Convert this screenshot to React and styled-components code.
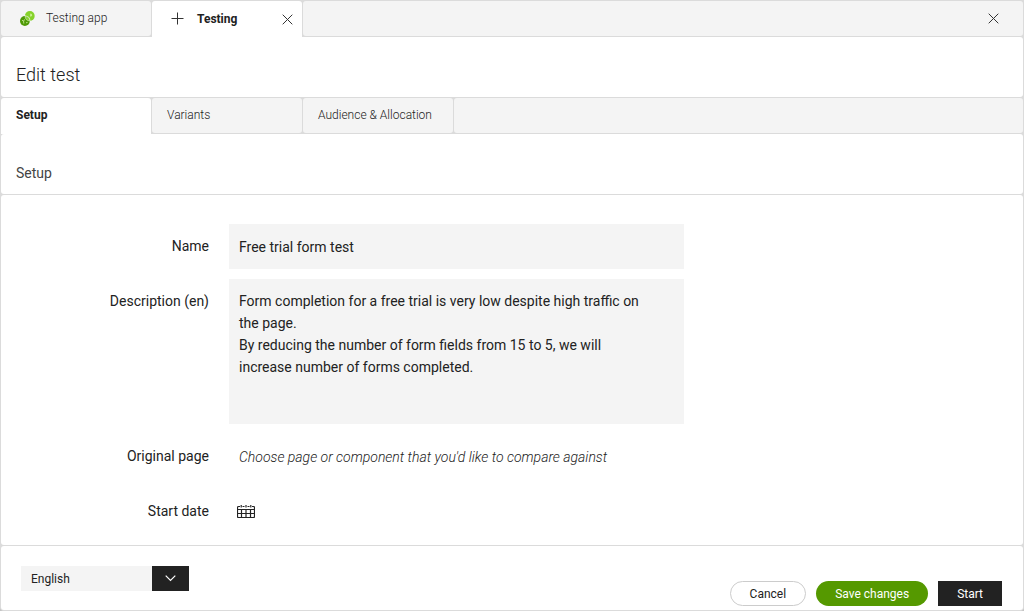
import React from "react";
import styled, { createGlobalStyle, css } from "styled-components";

const line = "#dbdbdb";
const grey = "#f4f4f4";
const ink = "#222222";

const GlobalStyle = createGlobalStyle`
  *, *::before, *::after { box-sizing: border-box; }
  body { margin: 0; background: #c4c4c4; color: ${ink}; font-family: Roboto, "Liberation Sans", sans-serif; font-size: 14px; }
  button, input, textarea, select { font: inherit; color: inherit; }
  h1, h2 { margin: 0; }
`;

const Window = styled.div`
  display: flex;
  flex-direction: column;
  gap: 1px;
  min-height: 100vh;
  padding: 1px;
  background: ${line};
  border-radius: 0 0 4px 4px;
`;

const Panel = styled.section`
  background: #fff;
  border-radius: 3px;
`;

const TabBar = styled.nav`
  display: grid;
  grid-template-columns: ${(p) => `repeat(${p.$tabs}, 150px)`} 1fr;
  grid-template-rows: 35px;
  gap: 1px;
`;

const tabBox = css`
  display: flex;
  align-items: center;
  height: ${(p) => (p.$active ? 36 : 35)}px;
  padding: 0 15px 2px;
  background: ${(p) => (p.$active ? "#fff" : grey)};
  border-radius: ${(p) => (p.$active ? "3px 3px 0 0" : "3px")};
  font-size: 12px;
  font-weight: ${(p) => (p.$active ? 700 : 300)};
`;

const AppTab = styled.div`
  ${tabBox}
  padding: 0 9px 0 18px;
`;

const TabLink = styled.button`
  display: flex;
  flex: 1;
  align-items: center;
  gap: 10px;
  padding: 0 0 1px;
  border: 0;
  background: none;
  cursor: pointer;
`;

const SectionTab = styled.button`
  ${tabBox}
  border: 0;
  text-align: left;
  cursor: pointer;
`;

const TabFiller = styled.div`
  display: flex;
  align-items: center;
  justify-content: flex-end;
  padding-right: 24px;
  background: ${grey};
  border-radius: 3px;
`;

const IconButton = styled.button`
  display: flex;
  padding: 0;
  border: 0;
  background: none;
  cursor: pointer;
`;

const TitlePanel = styled(Panel)`
  padding: 26px 15px 10px;
`;

const Title = styled.h1`
  font-size: 18px;
  font-weight: 300;
  line-height: 24px;
`;

const SubtitlePanel = styled(Panel)`
  padding: 29px 15px 11px;
`;

const Subtitle = styled.h2`
  font-size: 14px;
  font-weight: 400;
  line-height: 20px;
  color: #444;
`;

const FormPanel = styled(Panel).attrs({ as: "form" })`
  display: flex;
  flex: 1;
  flex-direction: column;
  gap: 10px;
  padding: 29px 15px 10px;
`;

const Field = styled.div`
  display: grid;
  grid-template-columns: 193px minmax(0, 455px);
  column-gap: 20px;
`;

const Label = styled.label`
  padding-top: 11px;
  line-height: 22px;
  text-align: right;
`;

const TextInput = styled.input`
  height: 45px;
  padding: 1px 10px 0;
  border: 0;
  background: ${grey};
  outline-color: #590;
`;

const TextArea = styled.textarea`
  height: 145px;
  padding: 11px 40px 11px 10px;
  border: 0;
  background: ${grey};
  line-height: 22px;
  resize: none;
  outline-color: #590;
`;

const PageInput = styled.input`
  height: 45px;
  padding: 1px 10px 0;
  border: 0;
  background: none;

  &::placeholder {
    color: ${ink};
    font-style: italic;
    font-weight: 300;
    opacity: 1;
  }
`;

const DateButton = styled(IconButton)`
  align-items: center;
  justify-self: start;
  height: 45px;
  padding: 0 8px;
`;

const Footer = styled(Panel).attrs({ as: "footer" })`
  display: flex;
  align-items: flex-start;
  justify-content: space-between;
  height: 64px;
  padding: 20px 21px 4px 20px;
`;

const SelectBox = styled.div`
  position: relative;
  width: 168px;
  height: 25px;
`;

const Select = styled.select`
  width: 100%;
  height: 100%;
  padding: 0 10px;
  border: 0;
  appearance: none;
  background: ${grey};
  font-size: 12px;
`;

const SelectArrow = styled.span`
  position: absolute;
  inset: 0 0 0 auto;
  display: flex;
  align-items: center;
  justify-content: center;
  width: 37px;
  background: ${ink};
  pointer-events: none;
`;

const Actions = styled.div`
  display: flex;
  align-self: flex-end;
  gap: 10px;
`;

const looks = {
  plain: css`border: 1px solid #ccc; border-radius: 13px; background: #fff;`,
  primary: css`border: 0; border-radius: 13px; background: #590; color: #fff;`,
  dark: css`border: 0; background: ${ink}; color: #fff;`,
};

const Button = styled.button`
  height: 25px;
  padding: 0 19px;
  font-size: 12px;
  cursor: pointer;
  ${(p) => looks[p.$look]}
`;

const Cross = () => (
  <svg width="11" height="11" viewBox="0 0 11 11" stroke="#333" strokeWidth="1" fill="none" aria-hidden="true">
    <path d="M.7.7l9.6 9.6M10.3.7L.7 10.3" />
  </svg>
);

const Plus = () => (
  <svg width="17" height="17" viewBox="0 0 17 17" stroke="#333" strokeWidth="1" fill="none" aria-hidden="true">
    <path d="M7.5 2.5v12M1.5 8.5h12" />
  </svg>
);

const AppLogo = () => (
  <svg width="17" height="17" viewBox="0 0 17 17" fill="none" aria-hidden="true">
    <circle cx="10.8" cy="6" r="4.9" fill="#86d22b" />
    <circle cx="5.9" cy="11" r="5.5" fill="#f4f4f4" />
    <circle cx="5.9" cy="11" r="4.9" fill="#4f9a06" />
    <path d="M6.1 6.1a5 5 0 0 1 4.7 4.8 5 5 0 0 1-4.7-4.8z" fill="#86d22b" stroke="#f4f4f4" strokeWidth=".5" />
    <path d="M11.2 3.6a2 2 0 0 1 2 2.2 2 2 0 0 1-2.2.6z" fill="#c9f08f" />
    <path d="M3 10.2l1.6 1 1-1.8M4.6 11.2l.2 2.4M7 12.8l1.6-.4" stroke="#d0eda6" strokeWidth=".8" />
  </svg>
);

const Calendar = () => (
  <svg width="18" height="15" viewBox="0 0 18 15" stroke="#222" strokeWidth="1.2" fill="none" aria-hidden="true">
    <path d="M3 2.5H1.5a1 1 0 0 0-1 1v9a1 1 0 0 0 1 1h15a1 1 0 0 0 1-1v-9a1 1 0 0 0-1-1H15M5.5 2.5h2M10.5 2.5h2M4.2 1v2.6M9 1v2.6M13.8 1v2.6" />
    <path d="M.5 5.5h17M.5 9.5h17M4.5 5.5v8M9 5.5v8M13.5 5.5v8" />
  </svg>
);

const Chevron = () => (
  <svg width="11" height="7" viewBox="0 0 11 7" stroke="#fff" strokeWidth="1.2" fill="none" aria-hidden="true">
    <path d="M.7.7l4.8 4.8L10.3.7" />
  </svg>
);

const description =
  "Form completion for a free trial is very low despite high traffic on the page.\nBy reducing the number of form fields from 15 to 5, we will increase number of forms completed.";

export default function App() {
  return (
    <>
      <GlobalStyle />
      <Window>
        <TabBar $tabs={2} aria-label="Apps">
          <AppTab>
            <TabLink type="button"><AppLogo />Testing app</TabLink>
          </AppTab>
          <AppTab $active>
            <TabLink type="button"><Plus />Testing</TabLink>
            <IconButton type="button" aria-label="Close tab"><Cross /></IconButton>
          </AppTab>
          <TabFiller>
            <IconButton type="button" aria-label="Close all"><Cross /></IconButton>
          </TabFiller>
        </TabBar>
        <TitlePanel>
          <Title>Edit test</Title>
        </TitlePanel>
        <TabBar $tabs={3} aria-label="Sections">
          <SectionTab type="button" $active>Setup</SectionTab>
          <SectionTab type="button">Variants</SectionTab>
          <SectionTab type="button">Audience &amp; Allocation</SectionTab>
          <TabFiller />
        </TabBar>
        <SubtitlePanel>
          <Subtitle>Setup</Subtitle>
        </SubtitlePanel>
        <FormPanel>
          <Field>
            <Label htmlFor="name">Name</Label>
            <TextInput id="name" defaultValue="Free trial form test" />
          </Field>
          <Field>
            <Label htmlFor="description">Description (en)</Label>
            <TextArea id="description" defaultValue={description} />
          </Field>
          <Field>
            <Label htmlFor="page">Original page</Label>
            <PageInput id="page" placeholder="Choose page or component that you'd like to compare against" />
          </Field>
          <Field>
            <Label htmlFor="date">Start date</Label>
            <DateButton id="date" type="button"><Calendar /></DateButton>
          </Field>
        </FormPanel>
        <Footer>
          <SelectBox>
            <Select aria-label="Language" defaultValue="English">
              <option>English</option>
            </Select>
            <SelectArrow><Chevron /></SelectArrow>
          </SelectBox>
          <Actions>
            <Button type="button" $look="plain">Cancel</Button>
            <Button type="button" $look="primary">Save changes</Button>
            <Button type="button" $look="dark">Start</Button>
          </Actions>
        </Footer>
      </Window>
    </>
  );
}
